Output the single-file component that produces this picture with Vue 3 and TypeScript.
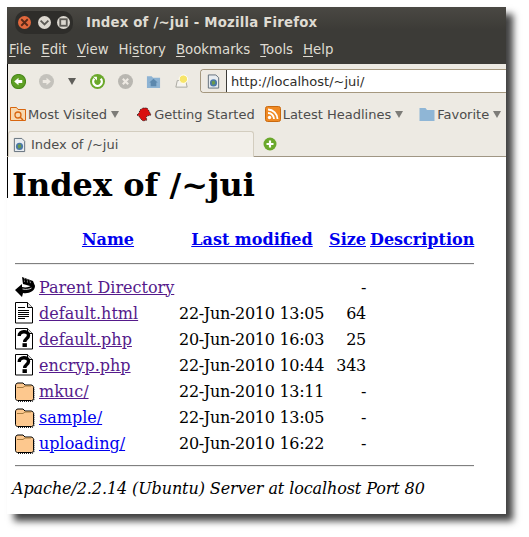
<script setup lang="ts">
const menus = [
  { pre: '', u: 'F', post: 'ile' },
  { pre: '', u: 'E', post: 'dit' },
  { pre: '', u: 'V', post: 'iew' },
  { pre: 'Hi', u: 's', post: 'tory' },
  { pre: '', u: 'B', post: 'ookmarks' },
  { pre: '', u: 'T', post: 'ools' },
  { pre: '', u: 'H', post: 'elp' },
]
const rows = [
  { icon: 'back', name: 'Parent Directory', date: '', size: '-', visited: true },
  { icon: 'text', name: 'default.html', date: '22-Jun-2010 13:05', size: '64', visited: true },
  { icon: 'unk', name: 'default.php', date: '20-Jun-2010 16:03', size: '25', visited: true },
  { icon: 'unk', name: 'encryp.php', date: '22-Jun-2010 10:44', size: '343', visited: true },
  { icon: 'dir', name: 'mkuc/', date: '22-Jun-2010 13:11', size: '-', visited: true },
  { icon: 'dir', name: 'sample/', date: '22-Jun-2010 13:05', size: '-', visited: false },
  { icon: 'dir', name: 'uploading/', date: '20-Jun-2010 16:22', size: '-', visited: false },
]
</script>

<template>
  <div class="stage">
    <div class="window">
      <header class="chrome">
        <div class="titlebar">
          <div class="controls">
            <span class="ctl close"><svg viewBox="0 0 10 10"><path d="M2.500 2.500l5 5M7.500 2.500l-5 5" stroke="#5a2a18" stroke-width="1.400"/></svg></span>
            <span class="ctl"><svg viewBox="0 0 10 10"><path d="M2 3.500l3 3 3-3" fill="none" stroke="#5c5a55" stroke-width="1.400"/></svg></span>
            <span class="ctl"><svg viewBox="0 0 10 10"><rect x="2.500" y="2.500" width="5" height="5" fill="none" stroke="#5c5a55" stroke-width="1.400"/></svg></span>
          </div>
          <span class="title">Index of /~jui - Mozilla Firefox</span>
        </div>
        <nav class="menubar">
          <span v-for="m in menus" :key="m.u" class="menu">{{ m.pre }}<u>{{ m.u }}</u>{{ m.post }}</span>
        </nav>
      </header>

      <div class="navbar">
        <svg class="nav" viewBox="1 1 14 14"><circle cx="8" cy="8" r="6.600" fill="#5fa025" stroke="#4a8a1c"/><path d="M4 8l4-3.500v2h3.500v3H8v2z" fill="#fff"/></svg>
        <svg class="nav fwd" viewBox="1 1 14 14"><circle cx="8" cy="8" r="7" fill="#c4c2bc"/><path d="M12 8L8 4.500v2H4.500v3H8v2z" fill="#eeeae3"/></svg>
        <span class="drop"></span>
        <svg class="nav reload" viewBox="1 1 14 14"><circle cx="8" cy="8" r="7" fill="#6aa82b"/><path d="M5 5.500A4 4 0 1 0 11 5.500" fill="none" stroke="#fff" stroke-width="2.200"/><path d="M4 3.500h3.500v3.500z" fill="#fff"/></svg>
        <svg class="nav stop" viewBox="1 1 14 14"><circle cx="8" cy="8" r="7" fill="#b9b7b1"/><path d="M5.500 5.500l5 5M10.500 5.500l-5 5" stroke="#eeeae3" stroke-width="2"/></svg>
        <svg class="nav home" viewBox="0 0 16 16"><path d="M1 2.500h5l1.500 1.500H15V15H1z" fill="#8db3d3"/><path d="M8 5l4.500 4h-1.500v4H5V9H3.500z" fill="#5c88ad"/></svg>
        <svg class="nav star" viewBox="0 0 16 16"><path d="M2 14l1.500-7h9l1.500 7z" fill="#f5f3ee" stroke="#a8a69f"/><circle cx="10" cy="5.500" r="4.500" fill="#f7e56a" stroke="#fff"/></svg>
        <div class="urlbar">
          <span class="urlfav"><svg viewBox="0 0 16 16"><path d="M2.500 1h8l3 3v11h-11z" fill="#e8ecf0" stroke="#5f6c78"/><circle cx="8" cy="9.500" r="3.800" fill="#4a78a8"/><path d="M6 8l3-1 1 3-3 2z" fill="#6a9a4a"/></svg></span>
          <span class="url">http://localhost/~jui/</span>
        </div>
      </div>

      <div class="bookmarks">
        <span class="bm mv">
          <svg viewBox="0 0 16 16"><path d="M.5 1.500h6l1.500 2h7.500v11H.5z" fill="#f7d9b0" stroke="#d8660f"/><circle cx="8" cy="9" r="3" fill="none" stroke="#d8660f" stroke-width="1.300"/><path d="M10 11l3 3" stroke="#d8660f" stroke-width="1.500"/></svg>
          Most Visited<i class="caret"></i>
        </span>
        <span class="bm gs">
          <svg viewBox="0 0 16 16"><path d="M1 9l2-2 1-3 3-2 4 0 2 3 2 4-4 1-1 2 1 2-4 1-3-3-1-2z" fill="#d81010" stroke="#222" stroke-dasharray="1 1"/></svg>
          Getting Started
        </span>
        <span class="bm lh">
          <svg viewBox="0 0 16 16"><rect x=".5" y=".5" width="15" height="15" rx="2" fill="#f08a24" stroke="#c96a10"/><circle cx="4.500" cy="11.500" r="1.700" fill="#fff"/><path d="M3 7a6 6 0 0 1 6 6M3 3.500A9.500 9.500 0 0 1 12.500 13" fill="none" stroke="#fff" stroke-width="1.800"/></svg>
          Latest Headlines<i class="caret"></i>
        </span>
        <span class="bm fav">
          <svg viewBox="0 0 16 16"><path d="M.5 2h6l1.500 2h7.500v11H.5z" fill="#8fb6d6"/></svg>
          Favorite<i class="caret"></i>
        </span>
      </div>

      <div class="tabs">
        <div class="tab">
          <svg viewBox="0 0 16 16"><path d="M2.500 1h8l3 3v11h-11z" fill="#e8ecf0" stroke="#5f6c78"/><circle cx="8" cy="9.500" r="3.800" fill="#4a78a8"/><path d="M6 8l3-1 1 3-3 2z" fill="#6a9a4a"/></svg>
          <span>Index of /~jui</span>
        </div>
        <svg class="newtab" viewBox="0 0 14 14"><circle cx="7" cy="7" r="6.500" fill="#6aa82b"/><path d="M7 3.500v7M3.500 7h7" stroke="#fff" stroke-width="2.200"/></svg>
      </div>

      <main class="page">
        <h1>Index of /~jui</h1>
        <table>
          <thead>
            <tr class="head">
              <th class="c-icon"></th>
              <th class="c-name"><a href="#">Name</a></th>
              <th class="c-date"><a href="#">Last modified</a></th>
              <th class="c-size"><a href="#">Size</a></th>
              <th class="c-desc"><a href="#">Description</a></th>
            </tr>
            <tr><th colspan="5" class="rule"><hr /></th></tr>
          </thead>
          <tbody>
            <tr v-for="r in rows" :key="r.name">
              <td class="c-icon">
                <svg v-if="r.icon === 'back'" class="ficon" viewBox="0 0 20 22"><path d="M7 1l11 4 2 5-5 0-7-2z" fill="#000"/><path d="M9 2.500l7 3M9 5l8 2" stroke="#bbb" stroke-dasharray="1 2"/><path d="M0 14l7-6v3c4 1 8 0 10-2l3 1c0 5-6 8-12 7l-1 4z" fill="#000"/><path d="M7.500 13c4 1 7 0 9-1" fill="none" stroke="#fff" stroke-opacity=".8"/></svg>
                <svg v-else-if="r.icon === 'text'" class="ficon" viewBox="0 0 20 22"><path d="M.5.500h12l5 5v15.500H.5z" fill="#fff" stroke="#000"/><path d="M12.500.500v5h5" fill="#ddd" stroke="#000"/><path d="M3 5.500h7M3 8.500h11M3 10.500h11M3 12.500h11M3 14.500h11M3 16.500h7" stroke="#000"/></svg>
                <svg v-else-if="r.icon === 'unk'" class="ficon" viewBox="0 0 20 22"><path d="M.5.500h12l5 5v15.500H.5z" fill="#fff" stroke="#000"/><path d="M12.500.500v5h5" fill="#ddd" stroke="#000"/><path d="M4.200 8c-.3-5.500 9.600-5.500 9.300-.5 0 3-3.800 3-3.800 6.500" fill="none" stroke="#000" stroke-width="3.400"/><rect x="7.500" y="15.200" width="4.400" height="3.800" fill="#000"/></svg>
                <svg v-else class="ficon" viewBox="0 0 20 22"><path d="M.5 6c0-2 1-3 2.500-3h5l2 2h6c1.500 0 2.500 1 2.500 2.500v11c0 1-1 2-2 2h-14c-1 0-2-1-2-2z" fill="#fdc88e" stroke="#000"/><path d="M2 7.500h6l2-1.500h6" fill="none" stroke="#a67c3f"/><path d="M3 21.500h14l2-2v-12" fill="none" stroke="#222" stroke-width="1.200" stroke-dasharray="1 1"/></svg>
              </td>
              <td class="c-name"><a href="#" :class="{ visited: r.visited }">{{ r.name }}</a></td>
              <td class="c-date">{{ r.date }}</td>
              <td class="c-size">{{ r.size }}</td>
              <td class="c-desc"></td>
            </tr>
            <tr><th colspan="5" class="rule rule2"><hr /></th></tr>
          </tbody>
        </table>
        <address>Apache/2.2.14 (Ubuntu) Server at localhost Port 80</address>
      </main>
    </div>
  </div>
</template>

<style>
html, body { margin: 0; background: #fff; }
</style>

<style scoped>
.stage {
  width: 529px;
  height: 537px;
  padding: 7px 0 0 7px;
  box-sizing: border-box;
  overflow: hidden;
  background: #fff;
}
.window {
  width: 499px;
  height: 507px;
  background: #fff;
  box-shadow: 7px 7px 7px rgba(0, 0, 0, 0.75);
  display: flex;
  flex-direction: column;
  font-family: "DejaVu Sans", sans-serif;
}
.chrome {
  background: linear-gradient(#4a4843, #3c3b37 40%);
  height: 57px;
  flex: none;
}
.titlebar { display: flex; align-items: center; height: 31px; padding-left: 8px; }
.controls {
  display: flex;
  gap: 6.500px;
  align-items: center;
  background: #2e2d2a;
  border-radius: 10px;
  padding: 3px;
  height: 17px;
  margin-right: 13px;
}
.ctl {
  width: 13px;
  height: 13px;
  border-radius: 50%;
  background: #dcd8d0;
  display: flex;
}
.ctl.close { background: #e2683c; }
.ctl svg { width: 100%; height: 100%; }
.title { color: #dfdbd2; font-size: 13.300px; font-weight: 700; letter-spacing: 0.190px; white-space: nowrap; }
.menubar { display: flex; gap: 10px; padding: 4px 0 0 2px; color: #dfdbd2; font-size: 13.300px; }
.menu u { text-underline-offset: 2px; }
.navbar {
  height: 34px;
  flex: none;
  background: #edeae3;
  box-shadow: inset 1px 0 #000;
  display: flex;
  align-items: center;
  padding: 0 0 0 4px;
  box-sizing: border-box;
  overflow: hidden;
}
.nav { width: 15px; height: 15px; flex: none; margin-right: 13px; }
.drop {
  width: 0; height: 0; flex: none;
  border-left: 4px solid transparent; border-right: 4px solid transparent;
  border-top: 7px solid #5f5e5a;
  margin: 0 14px 0 1px;
}
.urlbar {
  flex: 1;
  margin-left: -2px;
  height: 24px;
  background: #fff;
  border: 1px solid #a5987f;
  border-right: 0;
  border-radius: 4px 0 0 4px;
  display: flex;
  align-items: center;
  box-sizing: border-box;
}
.urlfav {
  width: 26px;
  height: 22px;
  background: #eeeae3;
  border-right: 1px solid #3c3b37;
  border-radius: 4px 0 0 4px;
  display: flex;
  align-items: center;
  justify-content: center;
  box-sizing: border-box;
}
.urlfav svg { width: 15px; height: 15px; }
.url { margin-left: 4px; font-size: 13px; color: #2e2d2a; }
.bookmarks {
  height: 32px;
  flex: none;
  background: #edeae3;
  box-shadow: inset 1px 0 #000;
  display: flex;
  align-items: center;
  color: #4c4c4c;
  font-size: 13px;
  white-space: nowrap;
  overflow: hidden;
  padding: 0 0 0 3px;
  box-sizing: border-box;
}
.bm { display: flex; align-items: center; gap: 2px; flex: none; }
.bm svg { width: 16px; height: 16px; flex: none; }
.bm.mv { margin-right: 17px; }
.bm.gs { margin-right: 10px; }
.bm.lh { margin-right: 16px; }
.caret {
  width: 0; height: 0;
  border-left: 4px solid transparent; border-right: 4px solid transparent;
  border-top: 7px solid #7d7c78;
  margin-left: 2px;
}
.tabs {
  height: 27px;
  flex: none;
  background: #edeae3;
  box-shadow: inset 1px 0 #000;
  border-bottom: 1px solid #a09684;
  box-sizing: border-box;
  display: flex;
  align-items: flex-end;
  padding-left: 1px;
}
.tab {
  width: 246px;
  height: 26px;
  box-sizing: border-box;
  background: #f2efe9;
  border: 1px solid #d3cdbf;
  border-bottom: 0;
  border-radius: 3px 3px 0 0;
  display: flex;
  align-items: center;
  gap: 4px;
  padding-left: 3px;
  font-size: 13px;
  color: #4c4c4c;
  margin-bottom: -1px;
}
.tab svg { width: 15px; height: 16px; flex: none; }
.newtab { width: 14px; height: 14px; margin: 0 0 5px 9px; flex: none; }
.page {
  flex: 1;
  padding: 0 0 0 5px;
  color: #000;
  font-family: "DejaVu Serif", serif;
  font-size: 16px;
  background: linear-gradient(#000, #000) 0 0 / 1px 41px no-repeat #fff;
}
h1 { margin: 0; padding-top: 9px; font-size: 32px; line-height: 38px; font-weight: 700; }
table {
  border-collapse: separate;
  border-spacing: 2px 0;
  margin: 22px 0 0 1px;
  table-layout: fixed;
  width: 463px;
}
th, td { padding: 0; font-size: 16px; line-height: 19px; height: 26px; white-space: nowrap; }
a { color: #0000ee; }
a.visited { color: #551a8b; }
.c-icon { width: 22px; text-align: left; }
.c-name { width: 138px; text-align: left; }
th.c-name { text-align: center; }
.c-date { width: 146px; text-align: left; }
td.c-date { letter-spacing: -0.300px; }
th.c-date { text-align: center; }
.c-size { width: 39px; text-align: right; }
td.c-size { letter-spacing: -0.300px; }
.c-desc { width: 106px; }
th.c-desc { width: 104px; padding-left: 2px; }
th.rule { height: 20px; padding-top: 2px; }
th.rule2 { height: 19px; padding-top: 0; }
.rule hr { margin: 0; border: 0; border-top: 1px solid #808080; border-bottom: 1px solid #eee; }
.ficon { display: block; width: 20px; height: 22px; }
address { font-style: italic; font-size: 16px; line-height: 19px; margin-top: 4px; white-space: nowrap; letter-spacing: -0.100px; }
</style>
